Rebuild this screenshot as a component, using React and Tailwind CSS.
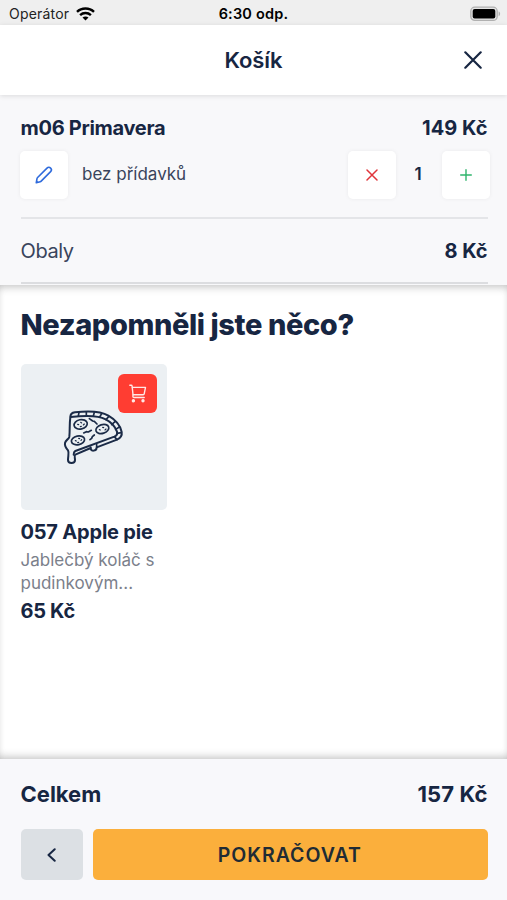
import React from "react";

function WifiIcon() {
  return (
    <svg width="19" height="14" viewBox="0 0 19 14" fill="none" stroke="#000" strokeWidth="2.4" className="block">
      <path d="M1 4.9C5.6.4 13.4.4 18 4.9" />
      <path d="M4.1 8.1c3-2.8 7.8-2.8 10.8 0" />
      <path d="M6.5 10.5c1.6-1.5 4.4-1.5 6 0l-3 3z" fill="#000" stroke="none" />
    </svg>
  );
}

function BatteryIcon() {
  return (
    <svg width="31" height="16" viewBox="0 0 31 16" className="block">
      <rect x="0.8" y="1.2" width="26.4" height="13.2" rx="4" fill="#e4e4e4" stroke="#b0b0b0" strokeWidth="1.3" />
      <rect x="2.7" y="3" width="22.6" height="9.6" rx="2" fill="#000" />
      <path d="M28.6 5.5c2 .7 2 4 0 4.7z" fill="#b0b0b0" />
    </svg>
  );
}

function PencilIcon() {
  return (
    <svg width="18" height="18" viewBox="0 0 18 18" fill="none" stroke="#2f6bdc" strokeWidth="1.6" strokeLinejoin="round" strokeLinecap="round">
      <path d="M1.3 16.7l.7-4.1c.1-.5.3-.8.6-1.1L12 2.1c1-1 2.6-1 3.6 0 1 1 1 2.5 0 3.5L6.2 15.1c-.3.3-.6.5-1 .6z" />
      <path d="M1.6 15.2l1.3 1.2" strokeWidth="1.2" />
    </svg>
  );
}

function CartIcon() {
  return (
    <svg width="18" height="19" viewBox="0 0 18 19" fill="none" stroke="#ffe9e6" strokeWidth="1.4" strokeLinecap="round" strokeLinejoin="round">
      <path d="M.8 1.2h1.4c.6 0 .8.3.9.9l.9 8.4c.1.9-.2 1.1-.1 2 0 .7.4 1 1.1 1h10.2" />
      <path d="M3.4 3.4h13.1l-1.3 6.5c-.1.5-.5.8-1 .8H4.1" />
      <circle cx="4.4" cy="16.7" r="1" fill="#ffe9e6" />
      <circle cx="14" cy="16.7" r="1" fill="#ffe9e6" />
    </svg>
  );
}

function PizzaIcon() {
  return (
    <svg width="70" height="70" viewBox="0 0 210 210" fill="none" stroke="#1b2b47" strokeWidth="6" strokeLinecap="round" strokeLinejoin="round" className="mb-[4px] block">
      <path d="M34 52C34 42 39 38 48 37C92 32 128 35 148 47C169 59 184 77 188 96C190 108 183 115 174 119L113 142V144C111 154 97 154 95 147V144L49 164C45 166 48 173 48 180C48 192 27 192 27 180C27 169 31 158 27 151C22 145 16 139 18 129C20 119 29 119 31 110C33 91 31 73 34 52Z" />
      <path d="M35 51C86 45 120 47 140 58C158 67 169 81 174 95C176 103 173 107 166 110L49 153C45 155 44 160 44 164" />
      <path d="M60 38l-2 9M82 36v11M106 37l-3 11M128 41l-6 10M149 50l-8 9M168 65l-10 9M181 81l-11 7M187 98l-13 2" strokeWidth="5" />
      <ellipse cx="65" cy="73" rx="20" ry="14" transform="rotate(-12 65 73)" strokeWidth="5" />
      <ellipse cx="130" cy="87" rx="20" ry="13" transform="rotate(-18 130 87)" strokeWidth="5" />
      <ellipse cx="57" cy="121" rx="20" ry="13" transform="rotate(-12 57 121)" strokeWidth="5" />
      <path d="M56 73l3 1M65 67l3 2M73 75l3-3M64 80l3-1M121 89l3 1M131 82l3 1M138 90l3-3M49 122l3 1M59 115l3 1M66 121l2-2M56 128l3-1" strokeWidth="3.5" />
      <path d="M91 56l10 7 5 1 8 8M74 99l8-4 6 1 9-5M93 119l5-4 2-5 6-5M113 142v-8M95 147v-6M166 110l8 9" strokeWidth="5" />
    </svg>
  );
}

function SquareButton({ label, children }) {
  return (
    <button aria-label={label} className="flex size-12 shrink-0 items-center justify-center rounded-[5px] bg-white shadow-[0_0_4px_rgba(0,0,0,0.06)]">
      {children}
    </button>
  );
}

export default function App() {
  return (
    <div className="flex h-[900px] w-[507px] flex-col overflow-hidden bg-white font-['Inter',sans-serif] text-[#172642]">
      <div className="grid h-[25px] shrink-0 grid-cols-3 items-center bg-[#efefef] pt-[2px] pr-[6px] pl-[9px] text-[14px] text-black">
        <div className="flex items-center gap-[7px] text-[#222]">
          <span className="tracking-[0.2px]">Operátor</span>
          <WifiIcon />
        </div>
        <span className="-ml-[3px] text-center text-[14.5px] font-semibold tracking-[0.2px] whitespace-nowrap">6:30 odp.</span>
        <div className="flex justify-end">
          <BatteryIcon />
        </div>
      </div>

      <header className="z-10 grid h-[70px] shrink-0 grid-cols-[1fr_auto_1fr] items-center bg-white px-[25px] shadow-[0_1px_5px_rgba(0,0,0,0.12)]">
        <span />
        <h1 className="text-[22px] font-semibold tracking-[-0.1px]">Košík</h1>
        <button aria-label="Zavřít" className="justify-self-end">
          <svg width="18" height="18" viewBox="0 0 18 18" stroke="#172642" strokeWidth="2.2" strokeLinecap="round" className="block">
            <path d="M1.3 1.3l15.4 15.4M16.7 1.3L1.3 16.7" />
          </svg>
        </button>
      </header>

      <section className="flex h-[190px] shrink-0 flex-col bg-[#f8f8fa] pr-[19.5px] pl-[20.5px]">
        <div className="flex h-[124px] flex-col border-b-2 border-[#e4e5e8] pt-[18px]">
          <div className="flex h-[30px] items-center justify-between text-[20px] font-bold">
            <span className="tracking-[-0.3px]">m06 Primavera</span>
            <span className="tracking-[0.05px]">149 Kč</span>
          </div>
          <div className="-mr-[2px] -ml-[0.5px] mt-[8px] flex items-center">
            <SquareButton label="Upravit"><PencilIcon /></SquareButton>
            <span className="ml-[14px] flex-1 text-[17px] text-[#39445c]">bez přídavků</span>
            <SquareButton label="Odebrat">
              <svg width="12" height="12" viewBox="0 0 12 12" stroke="#e0353b" strokeWidth="1.5" strokeLinecap="round">
                <path d="M1 1l10 10M11 1L1 11" />
              </svg>
            </SquareButton>
            <span className="w-[46px] pr-[1px] text-center text-[17px] font-semibold">1</span>
            <SquareButton label="Přidat">
              <svg width="12" height="12" viewBox="0 0 12 12" stroke="#2fb56c" strokeWidth="1.4" strokeLinecap="round">
                <path d="M6 .7v10.6M.7 6h10.6" />
              </svg>
            </SquareButton>
          </div>
        </div>
        <div className="flex h-[65px] items-center justify-between border-b-2 border-[#dcdde0] pt-[1px] text-[20px]">
          <span className="tracking-[-0.4px] text-[#39445c]">Obaly</span>
          <span className="font-bold">8 Kč</span>
        </div>
      </section>

      <main className="flex flex-1 flex-col bg-white pr-[19px] pl-[20.5px] pt-[20px] shadow-[inset_0_7px_8px_-5px_rgba(0,0,0,0.22),inset_0_-7px_8px_-5px_rgba(0,0,0,0.22),inset_0_0_10px_rgba(0,0,0,0.03)]">
        <h2 className="text-[29px] leading-[39px] font-extrabold tracking-[-0.4px] whitespace-nowrap">Nezapomněli jste něco?</h2>
        <article className="mt-[20px] w-[146.5px]">
          <div className="relative flex h-[146px] items-center justify-center rounded-[5px] bg-[#ecf0f3]">
            <PizzaIcon />
            <button aria-label="Do košíku" className="absolute top-[10px] right-[10px] flex size-[39px] items-center justify-center rounded-[6px] bg-[#ff3d32]">
              <CartIcon />
            </button>
          </div>
          <h3 className="mt-[8px] text-[20px] leading-[28px] font-bold tracking-[-0.2px] whitespace-nowrap">057 Apple pie</h3>
          <p className="mt-[3px] text-[17px] leading-[23px] text-[#7b808b]">
            Jablečbý koláč s<br />pudinkovým...
          </p>
          <p className="mt-[2px] text-[20px] leading-[29px] font-bold tracking-[-0.3px]">65 Kč</p>
        </article>
      </main>

      <footer className="flex h-[141px] shrink-0 flex-col bg-[#f8f8fb] pr-[19.5px] pl-[20.5px] pt-[18px]">
        <div className="flex h-[34px] items-center justify-between text-[22px] font-bold">
          <span>Celkem</span>
          <span className="tracking-[0.1px]">157 Kč</span>
        </div>
        <div className="mt-[18px] flex h-[51px] gap-[10px]">
          <button aria-label="Zpět" className="flex w-[62.5px] items-center justify-center rounded-[5px] bg-[#dce0e4]">
            <svg width="9" height="14" viewBox="0 0 9 14" fill="none" stroke="#172642" strokeWidth="2" strokeLinecap="round" strokeLinejoin="round">
              <path d="M7.7 1.2L1.5 7l6.2 5.8" />
            </svg>
          </button>
          <button className="flex-1 rounded-[5px] bg-[#fbaf3c] pt-[2px] pr-[1px] text-[19.5px] font-semibold tracking-[1px] text-[#202b34]">POKRAČOVAT</button>
        </div>
      </footer>
    </div>
  );
}
